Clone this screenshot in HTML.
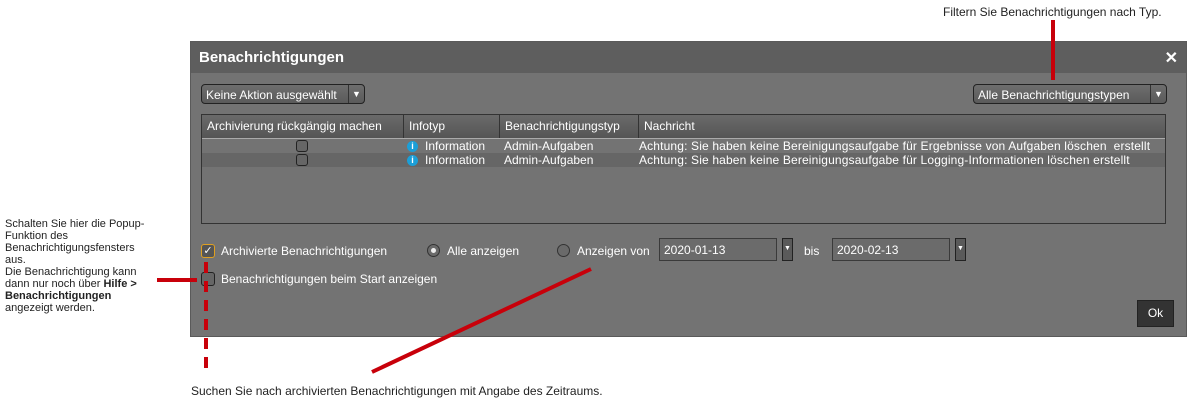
<!DOCTYPE html>
<html><head><meta charset="utf-8"><style>
body{margin:0;width:1187px;height:401px;background:#fff;position:relative;overflow:hidden;font-family:"Liberation Sans",sans-serif;font-size:12px}
.a{position:absolute}
.dlg{left:190px;top:41px;width:997px;height:296px;background:#737373;border:1px solid #5a5a5a;box-sizing:border-box}
.tb{left:0;top:0;width:100%;height:31px;background:#5e5e5e;color:#fff;font-weight:bold;font-size:15px;line-height:31px;padding-left:8px;box-sizing:border-box}
.w{color:#fff}
.sel{border:1px solid #222;border-radius:4px;background:linear-gradient(#6e6e6e,#5a5a5a);color:#fff;height:20px;line-height:20px;box-sizing:border-box;padding-left:4px}
.sel .ar{position:absolute;right:0;top:0;width:15px;height:18px;border-left:1px solid #333;font-size:9px;text-align:center;line-height:18px}
.th{background:linear-gradient(#6a6a6a,#555);border-right:1px solid #333;color:#fff;line-height:22px;padding-left:5px;box-sizing:border-box;height:23px;top:0}
.cb{width:12px;height:12px;border:1px solid #222;border-radius:3px;background:#666;box-sizing:border-box}
.ic{width:11px;height:11px;border-radius:50%;background:#1b9fd8;color:#fff;font-size:9px;font-weight:bold;text-align:center;line-height:11px}
.red{background:#c8000a}
.inp{background:#6b6b6b;border:1px solid #3a3a3a;color:#fff;height:23px;line-height:22px;box-sizing:border-box;padding-left:4px}
.dd{background:#5a5a5a;border:1px solid #222;width:11px;height:23px;box-sizing:border-box;color:#fff;font-size:7px;text-align:center;line-height:20px}
.rad{width:13px;height:13px;border-radius:50%;border:1px solid #333;background:#6a6a6a;box-sizing:border-box}
</style></head><body>
<div class="a" style="left:943px;top:5px;color:#222">Filtern Sie Benachrichtigungen nach Typ.</div>
<div class="a dlg">
 <div class="a tb">Benachrichtigungen</div>
 <div class="a w" style="right:8px;top:6px;font-size:16px;font-weight:bold">✕</div>
 <div class="a sel" style="left:10px;top:42px;width:164px">Keine Aktion ausgewählt<span class="ar">▼</span></div>
 <div class="a sel" style="left:782px;top:42px;width:194px">Alle Benachrichtigungstypen<span class="ar">▼</span></div>
 <div class="a" style="left:10px;top:72px;width:965px;height:110px;border:1px solid #333;box-sizing:border-box;background:#737373">
  <div class="a th" style="left:0;width:202px">Archivierung rückgängig machen</div>
  <div class="a th" style="left:202px;width:96px">Infotyp</div>
  <div class="a th" style="left:298px;width:139px">Benachrichtigungstyp</div>
  <div class="a th" style="left:437px;width:527px">Nachricht</div>
  <div class="a" style="left:0;top:23px;width:963px;height:1px;background:#aaa"></div>
  <div class="a" style="left:0;top:38px;width:963px;height:14px;background:#666"></div>
  <div class="a cb" style="left:94px;top:25px"></div><div class="a cb" style="left:94px;top:39px"></div>
  <div class="a ic" style="left:205px;top:26px">i</div><div class="a ic" style="left:205px;top:40px">i</div>
  <div class="a w" style="left:223px;top:24px;line-height:14px">Information</div>
  <div class="a w" style="left:223px;top:38px;line-height:14px">Information</div>
  <div class="a w" style="left:302px;top:24px;line-height:14px">Admin-Aufgaben</div>
  <div class="a w" style="left:302px;top:38px;line-height:14px">Admin-Aufgaben</div>
  <div class="a w" style="left:437px;top:24px;line-height:14px;white-space:pre;letter-spacing:0.15px">Achtung: Sie haben keine Bereinigungsaufgabe für Ergebnisse von Aufgaben löschen  erstellt</div>
  <div class="a w" style="left:437px;top:38px;line-height:14px;letter-spacing:0.15px">Achtung: Sie haben keine Bereinigungsaufgabe für Logging-Informationen löschen erstellt</div>
 </div>
 <div class="a cb" style="left:10px;top:202px;border-color:#e0a020;width:14px;height:14px;color:#fff;font-size:11px;text-align:center;line-height:12px;background:#555">✓</div>
 <div class="a w" style="left:30px;top:202px">Archivierte Benachrichtigungen</div>
 <div class="a rad" style="left:236px;top:202px"><div class="a" style="left:3px;top:3px;width:5px;height:5px;border-radius:50%;background:#eee"></div></div>
 <div class="a w" style="left:256px;top:202px">Alle anzeigen</div>
 <div class="a rad" style="left:366px;top:202px"></div>
 <div class="a w" style="left:386px;top:202px">Anzeigen von</div>
 <div class="a inp" style="left:468px;top:196px;width:118px">2020-01-13</div>
 <div class="a dd" style="left:591px;top:196px">▼</div>
 <div class="a w" style="left:613px;top:202px">bis</div>
 <div class="a inp" style="left:641px;top:196px;width:118px">2020-02-13</div>
 <div class="a dd" style="left:764px;top:196px">▼</div>
 <div class="a cb" style="left:10px;top:230px;width:14px;height:14px"></div>
 <div class="a w" style="left:30px;top:230px">Benachrichtigungen beim Start anzeigen</div>
 <div class="a" style="left:946px;top:258px;width:37px;height:27px;background:#333;border:1px solid #222;box-sizing:border-box;color:#fff;text-align:center;line-height:25px">Ok</div>
</div>
<div class="a red" style="left:1051px;top:20px;width:4px;height:60px"></div>
<div class="a red" style="left:157px;top:278px;width:40px;height:4px"></div>
<div class="a" style="left:204px;top:262px;width:4px;height:110px;background:repeating-linear-gradient(#c8000a 0 11px,transparent 11px 19px)"></div>
<svg class="a" style="left:0;top:0" width="1187" height="401"><line x1="591" y1="269" x2="372" y2="372" stroke="#c8000a" stroke-width="4"/></svg>
<div class="a" style="left:5px;top:218px;width:170px;line-height:12px;font-size:11px;color:#222;white-space:nowrap">Schalten Sie hier die Popup-<br>Funktion des<br>Benachrichtigungsfensters<br>aus.<br>Die Benachrichtigung kann<br>dann nur noch über <b>Hilfe &gt;</b><br><b>Benachrichtigungen</b><br>angezeigt werden.</div>
<div class="a" style="left:191px;top:384px;color:#222">Suchen Sie nach archivierten Benachrichtigungen mit Angabe des Zeitraums.</div>
</body></html>
